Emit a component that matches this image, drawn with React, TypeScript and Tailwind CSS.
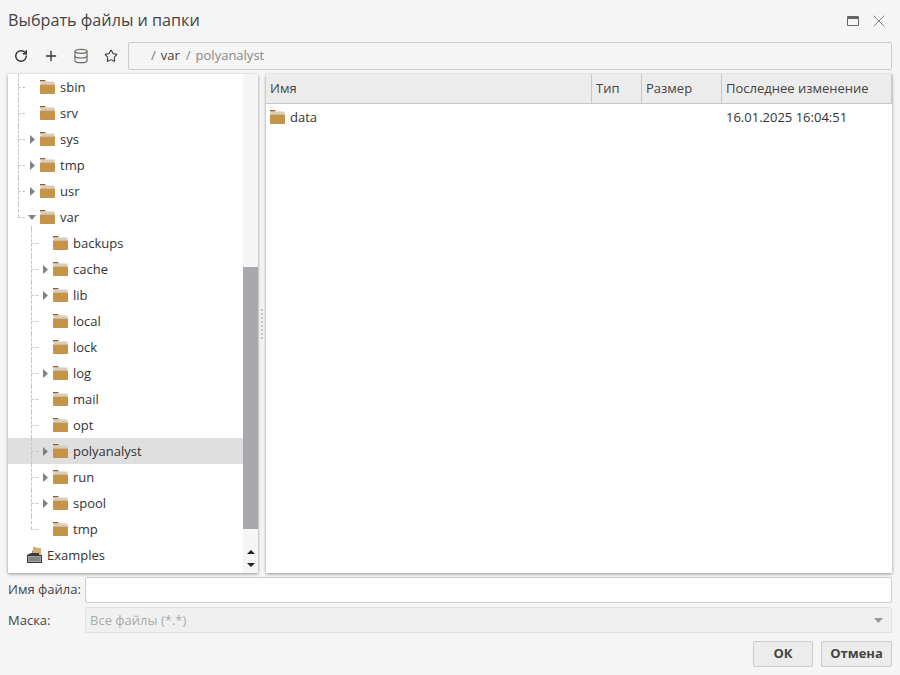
import { Plus, RotateCw, Database, Star, X } from 'lucide-react';

type Node = {
  name: string;
  depth: 1 | 2;
  arrow?: 'right' | 'down';
  selected?: boolean;
  last?: boolean;
};

const nodes: Node[] = [
  { name: 'sbin', depth: 1 },
  { name: 'srv', depth: 1 },
  { name: 'sys', depth: 1, arrow: 'right' },
  { name: 'tmp', depth: 1, arrow: 'right' },
  { name: 'usr', depth: 1, arrow: 'right' },
  { name: 'var', depth: 1, arrow: 'down', last: true },
  { name: 'backups', depth: 2 },
  { name: 'cache', depth: 2, arrow: 'right' },
  { name: 'lib', depth: 2, arrow: 'right' },
  { name: 'local', depth: 2 },
  { name: 'lock', depth: 2 },
  { name: 'log', depth: 2, arrow: 'right' },
  { name: 'mail', depth: 2 },
  { name: 'opt', depth: 2 },
  { name: 'polyanalyst', depth: 2, arrow: 'right', selected: true },
  { name: 'run', depth: 2, arrow: 'right' },
  { name: 'spool', depth: 2, arrow: 'right' },
  { name: 'tmp', depth: 2, last: true },
];

const FolderIcon = () => (
  <svg width="15" height="14" viewBox="0 0 15 14" className="shrink-0">
    <path d="M0 0h5l1 1.5h-6z" fill="#8a6230" />
    <rect x="0.5" y="1.5" width="14" height="3" fill="#d3cdc2" />
    <path d="M0 4.5h15v8.8l-.7.7H.7L0 13.3z" fill="#c69449" />
  </svg>
);

const DriveIcon = () => (
  <svg width="16" height="16" viewBox="0 0 16 16" className="shrink-0">
    <path d="M6 0h3l1 1h4v7H6z" fill="#d6ac74" />
    <path d="M5 4l1-1v4H5z" fill="#b08c5a" />
    <path d="M0 8l4-2h8v2h3v8H0z" fill="#3a3a3a" />
    <rect x="1" y="9" width="13" height="6" fill="#a4a4a4" />
    <rect x="2" y="10.5" width="11" height="1" fill="#666" />
    <rect x="2" y="12.5" width="11" height="1" fill="#666" />
  </svg>
);

const Arrow = ({ dir }: { dir: 'right' | 'down' }) =>
  dir === 'right' ? (
    <svg width="5" height="9" viewBox="0 0 5 9" className="shrink-0">
      <path d="M0 0l5 4.5L0 9z" fill="#7d8289" />
    </svg>
  ) : (
    <svg width="8" height="5" viewBox="0 0 8 5" className="shrink-0">
      <path d="M0 0h8L4 5z" fill="#7d8289" />
    </svg>
  );

const TreeRow = ({ node }: { node: Node }) => {
  const isTop = node.depth === 1;
  return (
    <div
      className={`relative flex items-center h-[26px] ${isTop ? 'pl-[22px]' : 'pl-[35px]'} ${
        node.selected ? 'bg-[#dfdfdf]' : ''
      }`}
    >
      {/* dashed connectors of the tree */}
      <span
        className={`absolute top-0 w-0 border-l border-dashed border-[#c4c4c4] ${isTop ? 'left-[10px]' : 'left-[23px]'} ${
          node.last ? 'h-[13px]' : 'h-[26px]'
        }`}
      />
      <span
        className={`absolute top-[13px] h-0 w-[7px] border-t border-dashed border-[#c4c4c4] ${
          isTop ? 'left-[10px]' : 'left-[23px]'
        }`}
      />
      {node.name === 'var' && (
        <span className="absolute left-[23px] top-[22px] h-[4px] w-0 border-l border-dashed border-[#c4c4c4]" />
      )}
      <span className={`flex items-center shrink-0 h-[26px] ${node.arrow === 'down' ? '-ml-[2px] w-[12px]' : 'w-[10px]'}`}>
        {node.arrow && <Arrow dir={node.arrow} />}
      </span>
      <FolderIcon />
      <span className="ml-[5px] pt-[2px] text-[13px] text-[#333]">{node.name}</span>
    </div>
  );
};

const HeaderCell = ({ label, className }: { label: string; className: string }) => (
  <div className={`flex items-center pl-[4px] h-full border-r border-[#c8c8c8] text-[13px] text-[#444] ${className}`}>
    {label}
  </div>
);

const ToolIcon = ({ children }: { children: React.ReactNode }) => (
  <span className="flex items-center justify-center w-[30px]">{children}</span>
);

export default function App() {
  return (
    <div
      className="w-[900px] h-[675px] bg-[#f5f5f5] flex flex-col overflow-hidden text-[#333]"
      style={{ fontFamily: '"Open Sans", sans-serif' }}
    >
      {/* title */}
      <div className="flex items-center justify-between h-[42px] pl-[8px] pr-[11px]">
        <span className="pb-[2px] text-[16.2px] text-[#444]">Выбрать файлы и папки</span>
        <div className="flex items-center gap-[10px]">
          <span className="block w-[12px] h-[10px] border border-[#666] border-t-[3px] rounded-[1px]" />
          <X size={20} strokeWidth={1} color="#666" />
        </div>
      </div>

      {/* toolbar */}
      <div className="flex items-center h-[28px] pl-[6px] pr-[8px]">
        <div className="flex items-center w-[122px] text-[#333]">
          <ToolIcon>
            <RotateCw size={14} strokeWidth={2.5} />
          </ToolIcon>
          <ToolIcon>
            <Plus size={16} strokeWidth={2} />
          </ToolIcon>
          <ToolIcon>
            <Database size={16} strokeWidth={1.75} color="#6f6a62" />
          </ToolIcon>
          <ToolIcon>
            <Star size={14} strokeWidth={1.75} />
          </ToolIcon>
        </div>
        <div className="flex-1 h-[28px] flex items-center pl-[22px] border border-[#ccc] rounded-[2px] text-[13px]">
          <span className="text-[#777]">/</span>
          <span className="ml-[5px] text-[#444]">var</span>
          <span className="ml-[6px] text-[#888]">/</span>
          <span className="ml-[5px] text-[#888]">polyanalyst</span>
        </div>
      </div>

      {/* panels */}
      <div className="flex mt-[4px] h-[499px] px-[8px]">
        <div className="flex w-[250px] bg-white shadow-[0_1px_3px_rgba(0,0,0,0.4)]">
          <div className="flex-1 overflow-hidden">
            {nodes.map((n, i) => (
              <TreeRow key={i} node={n} />
            ))}
            <div className="flex items-center h-[26px] pl-[19px]">
              <DriveIcon />
              <span className="ml-[4px] pt-[2px] text-[13px] text-[#333]">Examples</span>
            </div>
          </div>
          <div className="w-[15px] bg-[#f5f5f5] flex flex-col">
            <div className="h-[193px]" />
            <div className="h-[262px] bg-[#a9a9ad]" />
            <div className="flex-1 flex flex-col items-center justify-end gap-[9px] pb-[6px]">
              <svg width="8" height="4" viewBox="0 0 8 4">
                <path d="M0 4h8L4 0z" fill="#222" />
              </svg>
              <svg width="8" height="4" viewBox="0 0 8 4">
                <path d="M0 0h8L4 4z" fill="#222" />
              </svg>
            </div>
          </div>
        </div>

        {/* splitter */}
        <div className="w-[8px] flex flex-col items-center justify-center gap-[2px]">
          {[0, 1, 2, 3, 4, 5, 6, 7].map((d) => (
            <span key={d} className="block w-[2px] h-[2px] bg-[#c4c4c4]" />
          ))}
        </div>

        <div className="flex-1 bg-white shadow-[0_1px_3px_rgba(0,0,0,0.4)]">
          <div className="flex h-[30px] bg-[#ececec] border-b border-[#c8c8c8]">
            <HeaderCell label="Имя" className="w-[326px]" />
            <HeaderCell label="Тип" className="w-[50px]" />
            <HeaderCell label="Размер" className="w-[80px]" />
            <HeaderCell label="Последнее изменение" className="flex-1" />
          </div>
          <div className="flex items-center h-[26px] text-[13px] text-[#333]">
            <div className="flex items-center w-[456px] pl-[4px]">
              <FolderIcon />
              <span className="ml-[5px] pt-[2px]">data</span>
            </div>
            <span className="pl-[4px] pt-[2px]">16.01.2025 16:04:51</span>
          </div>
        </div>
      </div>

      {/* file name and mask */}
      <div className="flex items-center mt-[4px] h-[26px] px-[8px]">
        <label className="w-[77px] text-[13px] text-[#444]">Имя файла:</label>
        <input className="flex-1 h-[26px] bg-white border border-[#ccc] rounded-[2px]" />
      </div>
      <div className="flex items-center mt-[4px] h-[26px] px-[8px]">
        <label className="w-[77px] pt-[2px] text-[13px] text-[#444]">Маска:</label>
        <div className="flex-1 h-[26px] flex items-center justify-between pl-[4px] pr-[8px] bg-[#f0f0f0] border border-[#e0e0e0] rounded-[2px] text-[13px] text-[#aaa]">
          <span className="pt-[2px]">Все файлы (*.*)</span>
          <svg width="9" height="5" viewBox="0 0 9 5">
            <path d="M0 0h9L4.5 5z" fill="#999" />
          </svg>
        </div>
      </div>

      {/* buttons */}
      <div className="flex justify-end gap-[8px] mt-[8px] px-[8px]">
        <button className="w-[60px] h-[26px] bg-[#ececec] border border-[#ccc] rounded-[2px] text-[13px] font-bold text-[#444]">
          ОК
        </button>
        <button className="w-[71px] h-[26px] bg-[#ececec] border border-[#ccc] rounded-[2px] text-[13px] font-bold text-[#444]">
          Отмена
        </button>
      </div>
    </div>
  );
}
